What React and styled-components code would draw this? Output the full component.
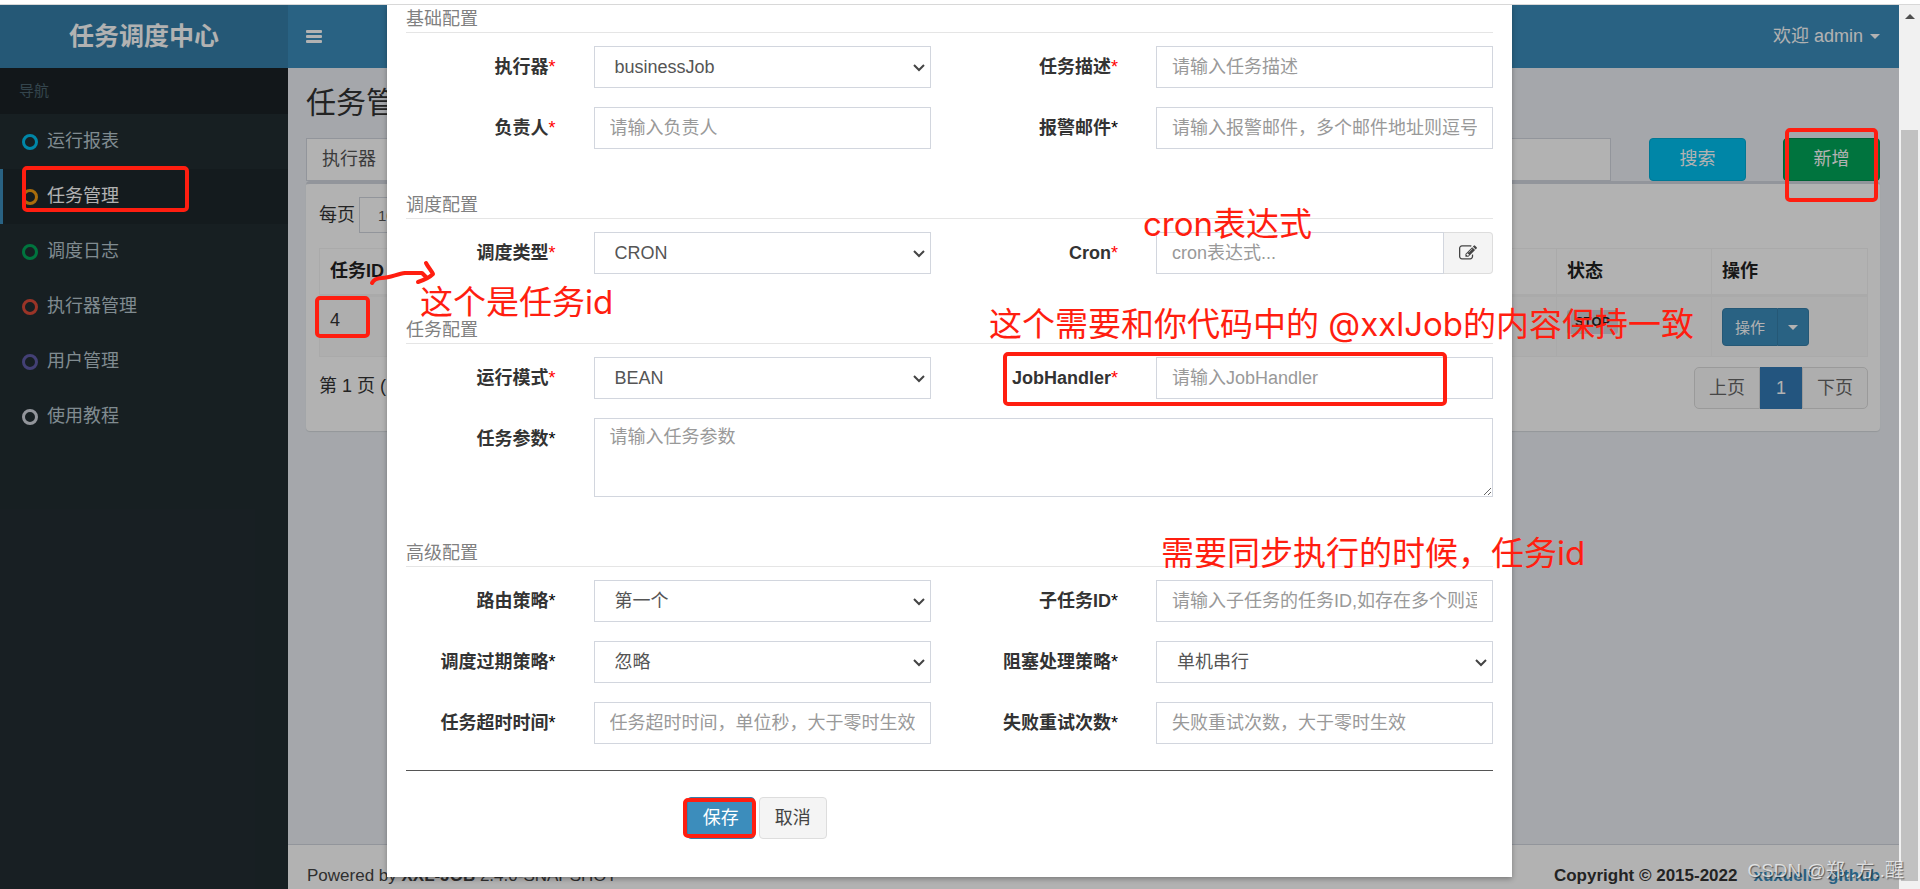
import React, { useState } from 'react';
import styled, { createGlobalStyle, css } from 'styled-components';

const colors = {
  primary: '#3c8dbc',
  primaryDark: '#367fa9',
  sidebar: '#222d32',
  border: '#d2d6de',
  line: '#e5e5e5',
  text: '#333',
  muted: '#999',
  mark: '#ff1e10',
};

const GlobalStyle = createGlobalStyle`
  * {
    box-sizing: border-box;
  }

  body {
    margin: 0;
    background: #fff;
    color: ${colors.text};
    font-family: 'Liberation Sans', 'Noto Sans CJK SC', sans-serif;
    font-size: 18px;
    line-height: 25px;
  }

  button, input, select, textarea {
    font: inherit;
    margin: 0;
  }

  a {
    text-decoration: none;
  }
`;

const Page = styled.div`
  position: relative;
  height: 100vh;
  display: flex;
  flex-direction: column;
  overflow: hidden;
`;

const WindowEdge = styled.div`
  flex: none;
  height: 5px;
  border-bottom: 1px solid #d8d8d8;
`;

const Viewport = styled.div`
  flex: 1;
  min-height: 0;
  display: flex;
`;

const Shell = styled.div`
  position: relative;
  flex: 1;
  min-width: 0;
  display: flex;
  flex-direction: column;
  overflow: hidden;
`;

/* ---------- header ---------- */

const Header = styled.header`
  flex: none;
  display: flex;
  height: 63px;
  background: ${colors.primary};
  color: #fff;
`;

const Logo = styled.a`
  width: 288px;
  background: ${colors.primaryDark};
  color: #fff;
  font-size: 25px;
  font-weight: bold;
  line-height: 63px;
  text-align: center;
`;

const Navbar = styled.nav`
  flex: 1;
  display: flex;
  align-items: center;
  justify-content: space-between;
  padding: 0 19px 0 18px;
`;

const NavButton = styled.button`
  display: flex;
  align-items: center;
  gap: 7px;
  padding: 0;
  border: 0;
  background: none;
  color: #fff;
`;

const Caret = styled.span`
  border: 5px solid transparent;
  border-top-color: currentColor;
  border-bottom: 0;
`;

/* ---------- sidebar ---------- */

const Columns = styled.div`
  flex: 1;
  min-height: 0;
  display: flex;
`;

const Sidebar = styled.aside`
  flex: none;
  width: 288px;
  background: ${colors.sidebar};
`;

const SidebarTitle = styled.div`
  padding: 0 19px;
  background: #1a2226;
  color: #4b646f;
  font-size: 15px;
  line-height: 46px;
`;

const MenuLink = styled.a`
  display: flex;
  align-items: center;
  gap: 9px;
  height: 55px;
  padding-left: 19px;
  border-left: 3px solid transparent;
  color: #b8c7ce;

  ${props => props.$active && css`
    background: #1e282c;
    border-left-color: ${colors.primary};
    color: #fff;
  `}
`;

const Ring = styled.span`
  width: 16px;
  height: 16px;
  border: 3px solid ${props => props.$color};
  border-radius: 50%;
`;

/* ---------- content ---------- */

const Main = styled.div`
  flex: 1;
  min-width: 0;
  display: flex;
  flex-direction: column;
  background: #ecf0f5;
`;

const Content = styled.main`
  flex: 1;
  padding: 16px 19px 0 18px;
`;

const Title = styled.h1`
  margin: 0 0 16px;
  font-size: 30px;
  font-weight: normal;
  line-height: 38px;
`;

const Filters = styled.div`
  display: flex;
  height: 43px;
`;

const FilterGroup = styled.label`
  flex: 1;
  display: flex;
  margin-right: 38px;
`;

const FilterAddon = styled.span`
  padding: 0 15px;
  border: 1px solid ${colors.border};
  background: #fff;
  color: #555;
  line-height: 41px;
`;

const FilterInput = styled.input`
  flex: 1;
  min-width: 0;
  border: 1px solid ${colors.border};
  border-left: 0;
  background: #fff;
`;

const FilterButton = styled.button`
  width: 97px;
  border: 1px solid ${props => props.$border};
  border-radius: 4px;
  background: ${props => props.$color};
  color: #fff;

  & + & {
    margin-left: 37px;
  }
`;

const Box = styled.section`
  padding: 13px 12px 22px 13px;
  border-top: 3px solid ${colors.border};
  border-radius: 4px;
  background: #fff;
  box-shadow: 0 1px 1px rgba(0, 0, 0, 0.1);
`;

const PageLength = styled.label`
  display: flex;
  align-items: center;
  gap: 4px;
  margin-bottom: 15px;
`;

const LengthSelect = styled.select`
  width: 94px;
  height: 36px;
  padding: 0 14px;
  border: 1px solid ${colors.border};
  background: #fff;
  color: #555;
  font-size: 15px;
`;

const JobTable = styled.table`
  width: 100%;
  border-collapse: collapse;
  table-layout: fixed;
  font-size: 18px;

  th, td {
    padding: 10px;
    border: 1px solid #f4f4f4;
    text-align: left;
    vertical-align: top;
  }

  td {
    padding-top: 11px;
  }

  th {
    border-bottom-width: 3px;
    color: #222;
  }

  tbody tr {
    background: #f9f9f9;
  }

  .id {
    width: 120px;
  }

  .status {
    width: 155px;
  }

  .action {
    width: 156px;
  }
`;

const StatusBadge = styled.span`
  display: inline-block;
  padding: 0 8px;
  border-radius: 3px;
  background: ${colors.border};
  color: #222;
  font-size: 13px;
  font-weight: bold;
  line-height: 24px;
`;

const SplitButton = styled.div`
  display: flex;
  height: 38px;
`;

const SplitPart = styled.button`
  display: flex;
  align-items: center;
  padding: 0 12px;
  border: 1px solid ${colors.primaryDark};
  border-radius: 4px 0 0 4px;
  background: ${colors.primary};
  color: #fff;
  font-size: 15px;

  & + & {
    padding: 0 10px;
    border-left: 0;
    border-radius: 0 4px 4px 0;
  }
`;

const TableFooter = styled.div`
  display: flex;
  justify-content: space-between;
  padding-top: 10px;
`;

const TableInfo = styled.div`
  line-height: 38px;
`;

const Pagination = styled.div`
  display: flex;
  height: 42px;
`;

const PageButton = styled.button`
  min-width: 42px;
  padding: 0 14px;
  border: 1px solid #ddd;
  background: #fafafa;
  color: #666;

  &:first-child {
    border-radius: 5px 0 0 5px;
  }

  &:last-child {
    border-radius: 0 5px 5px 0;
  }

  ${props => props.$active && css`
    border-color: #337ab7;
    background: #337ab7;
    color: #fff;
  `}
`;

const Footer = styled.footer`
  flex: none;
  display: flex;
  justify-content: space-between;
  padding: 18px 19px 1px;
  border-top: 1px solid ${colors.border};
  background: #fff;
  color: #444;
  font-size: 17px;
`;

const Copyright = styled.div`
  display: flex;
  gap: 16px;
  color: ${colors.text};
  font-weight: bold;

  a {
    color: ${colors.primary};
  }
`;

/* ---------- modal ---------- */

const Backdrop = styled.div`
  position: absolute;
  inset: 0;
  background: rgba(0, 0, 0, 0.3);
`;

const Modal = styled.form`
  width: 1125px;
  max-width: 100%;
  margin: 0 auto;
  padding: 0 19px 38px;
  background: #fff;
  box-shadow: 0 2px 5px rgba(0, 0, 0, 0.3);
`;

const Group = styled.section`
  & + & {
    margin-top: 42px;
  }
`;

const GroupTitle = styled.p`
  margin: 0 0 13px;
  padding-top: 2px;
  border-bottom: 1px solid ${colors.line};
  color: #808080;
  line-height: 25px;
`;

const Row = styled.div`
  display: grid;
  grid-template-columns: 2fr 4fr 2fr 4fr;
  margin: 0 -19px;

  & + & {
    margin-top: 19px;
  }
`;

const FieldLabel = styled.label`
  min-width: 0;
  padding: 9px 19px 0;
  font-weight: bold;
  line-height: 25px;
  text-align: right;
`;

const Star = styled.span`
  color: ${props => (props.$required ? 'red' : '#000')};
  font-weight: normal;
`;

const Control = styled.div`
  position: relative;
  display: flex;
  min-width: 0;
  margin: 0 19px;
  grid-column: ${props => (props.$wide ? 'span 3' : 'auto')};
`;

const fieldStyle = css`
  flex: 1;
  width: 100%;
  min-width: 0;
  height: 42px;
  border: 1px solid ${colors.border};
  border-radius: 0;
  background: #fff;
  color: #555;
`;

const TextInput = styled.input`
  ${fieldStyle}
  padding: 0 15px;

  &::placeholder {
    color: ${colors.muted};
  }
`;

const Select = styled.select`
  ${fieldStyle}
  padding: 0 20px;
  appearance: none;
`;

const SelectArrow = styled.svg`
  position: absolute;
  right: 6px;
  top: 18px;
  width: 12px;
  height: 8px;
  pointer-events: none;
`;

const TextArea = styled.textarea`
  ${fieldStyle}
  height: 79px;
  padding: 6px 15px;

  &::placeholder {
    color: ${colors.muted};
  }
`;

const AddonButton = styled.button`
  display: flex;
  align-items: center;
  justify-content: center;
  width: 49px;
  border: 1px solid #ddd;
  border-left: 0;
  border-radius: 0 4px 4px 0;
  background: #f4f4f4;
  color: #444;
`;

const Divider = styled.hr`
  margin: 26px 0;
  border: 0;
  border-top: 1px solid #555;
`;

const Actions = styled.div`
  display: flex;
  gap: 4px;
  margin-left: calc(25% + 9px);
`;

const ActionButton = styled.button`
  height: 42px;
  padding: 0 15px;
  border: 1px solid ${props => (props.$primary ? colors.primaryDark : '#ddd')};
  border-radius: 4px;
  background: ${props => (props.$primary ? colors.primary : '#f4f4f4')};
  color: ${props => (props.$primary ? '#fff' : '#444')};
`;

/* ---------- scrollbar ---------- */

const ScrollTrack = styled.div`
  flex: none;
  display: flex;
  flex-direction: column;
  width: 21px;
  padding: 9px 2px 8px;
  background: #f1f1f1;
`;

const ScrollUp = styled.span`
  align-self: center;
  margin-bottom: 111px;
  border: 5px solid transparent;
  border-top: 0;
  border-bottom-color: #505050;
`;

const ScrollThumb = styled.div`
  flex: 1;
  background: #c1c1c1;
`;

/* ---------- notes drawn over the page ---------- */

const Notes = styled.div`
  position: absolute;
  inset: 0;
  pointer-events: none;
`;

const NoteBox = styled.div`
  position: absolute;
  left: ${props => props.$x}px;
  top: ${props => props.$y}px;
  width: ${props => props.$w}px;
  height: ${props => props.$h}px;
  border: 4px solid ${colors.mark};
  border-radius: 5px;
`;

const NoteText = styled.div`
  position: absolute;
  left: ${props => props.$x}px;
  top: ${props => props.$y}px;
  color: ${colors.mark};
  font-family: Inter, 'Noto Sans CJK SC', sans-serif;
  font-size: 33px;
  line-height: 44px;
  white-space: pre;
`;

const NoteArrow = styled.svg`
  position: absolute;
  left: 366px;
  top: 256px;
  width: 74px;
  height: 34px;
`;

const Watermark = styled.div`
  position: absolute;
  right: 16px;
  bottom: 6px;
  color: rgba(255, 255, 255, 0.7);
  font-size: 19px;
  text-shadow: 1px 1px 1px rgba(0, 0, 0, 0.5);
`;

const menu = [
  { name: '运行报表', color: '#00c0ef' },
  { name: '任务管理', color: '#f39c12', active: true },
  { name: '调度日志', color: '#00a65a' },
  { name: '执行器管理', color: '#dd4b39' },
  { name: '用户管理', color: '#605ca8' },
  { name: '使用教程', color: '#d2d6de' },
];

const groups = [
  {
    title: '基础配置',
    rows: [
      [
        { id: 'jobGroup', label: '执行器', required: true, options: ['businessJob'] },
        { id: 'jobDesc', label: '任务描述', required: true, placeholder: '请输入任务描述' },
      ],
      [
        { id: 'author', label: '负责人', required: true, placeholder: '请输入负责人' },
        { id: 'alarmEmail', label: '报警邮件', placeholder: '请输入报警邮件，多个邮件地址则逗号分隔' },
      ],
    ],
  },
  {
    title: '调度配置',
    rows: [
      [
        { id: 'scheduleType', label: '调度类型', required: true, options: ['CRON'] },
        { id: 'cron', label: 'Cron', required: true, placeholder: 'cron表达式...', edit: true },
      ],
    ],
  },
  {
    title: '任务配置',
    rows: [
      [
        { id: 'glueType', label: '运行模式', required: true, options: ['BEAN'] },
        { id: 'handler', label: 'JobHandler', required: true, placeholder: '请输入JobHandler' },
      ],
      [{ id: 'param', label: '任务参数', placeholder: '请输入任务参数', multiline: true }],
    ],
  },
  {
    title: '高级配置',
    rows: [
      [
        { id: 'route', label: '路由策略', options: ['第一个'] },
        { id: 'childJob', label: '子任务ID', placeholder: '请输入子任务的任务ID,如存在多个则逗号分隔' },
      ],
      [
        { id: 'misfire', label: '调度过期策略', options: ['忽略'] },
        { id: 'block', label: '阻塞处理策略', options: ['单机串行'] },
      ],
      [
        { id: 'timeout', label: '任务超时时间', placeholder: '任务超时时间，单位秒，大于零时生效' },
        { id: 'retry', label: '失败重试次数', placeholder: '失败重试次数，大于零时生效' },
      ],
    ],
  },
];

const BarsIcon = () => (
  <svg width="16" height="14" viewBox="0 0 16 14" fill="currentColor" aria-hidden="true">
    <rect y="0" width="16" height="3" rx="1" />
    <rect y="5" width="16" height="3" rx="1" />
    <rect y="10" width="16" height="3" rx="1" />
  </svg>
);

const EditIcon = () => (
  <svg width="18" height="18" viewBox="0 0 1792 1792" fill="currentColor" aria-hidden="true">
    <path d="M888 1184l116-116-152-152-116 116v56h96v96h56zm440-720q-16-16-33 1l-350 350q-17 17-1 33t33-1l350-350q17-17 1-33zm80 594v190q0 119-84.500 203.500t-203.500 84.500h-832q-119 0-203.500-84.500t-84.500-203.500v-832q0-119 84.500-203.500t203.500-84.500h832q63 0 117 25 15 7 18 23 3 17-9 29l-49 49q-14 14-32 8-23-6-45-6h-832q-66 0-113 47t-47 113v832q0 66 47 113t113 47h832q66 0 113-47t47-113v-126q0-13 9-22l64-64q15-15 35-7t20 29zm-96-738l288 288-672 672h-288v-288zm444 132l-92 92-288-288 92-92q28-28 68-28t68 28l152 152q28 28 28 68t-28 68z" />
  </svg>
);

const Field = ({ field }) => {
  const [value, setValue] = useState(field.options ? field.options[0] : '');
  const inputProps = {
    id: field.id,
    value,
    onChange: e => setValue(e.target.value),
  };

  return (
    <>
      <FieldLabel htmlFor={field.id}>
        {field.label}<Star $required={field.required}>*</Star>
      </FieldLabel>
      <Control $wide={field.multiline}>
        {field.options && (
          <>
            <Select {...inputProps}>
              {field.options.map(option => <option key={option}>{option}</option>)}
            </Select>
            <SelectArrow viewBox="0 0 12 8" fill="none" stroke="#444" strokeWidth="2">
              <path d="M1 1l5 5 5-5" />
            </SelectArrow>
          </>
        )}
        {field.multiline && <TextArea {...inputProps} placeholder={field.placeholder} />}
        {!field.options && !field.multiline && (
          <TextInput {...inputProps} type="text" placeholder={field.placeholder} />
        )}
        {field.edit && (
          <AddonButton type="button" aria-label={field.label}>
            <EditIcon />
          </AddonButton>
        )}
      </Control>
    </>
  );
};

const JobModal = () => (
  <Backdrop>
    <Modal onSubmit={e => e.preventDefault()}>
      {groups.map(group => (
        <Group key={group.title}>
          <GroupTitle>{group.title}</GroupTitle>
          {group.rows.map(row => (
            <Row key={row[0].id}>
              {row.map(field => <Field key={field.id} field={field} />)}
            </Row>
          ))}
        </Group>
      ))}
      <Divider />
      <Actions>
        <ActionButton type="submit" $primary>保存</ActionButton>
        <ActionButton type="button">取消</ActionButton>
      </Actions>
    </Modal>
  </Backdrop>
);

const JobList = () => (
  <Content>
    <Title>任务管理</Title>
    <Filters>
      <FilterGroup>
        <FilterAddon>执行器</FilterAddon>
        <FilterInput type="text" />
      </FilterGroup>
      <FilterButton $color="#00c0ef" $border="#00acd6">搜索</FilterButton>
      <FilterButton $color="#00a65a" $border="#008d4c">新增</FilterButton>
    </Filters>
    <Box>
      <PageLength>
        每页
        <LengthSelect defaultValue="10">
          <option>10</option>
        </LengthSelect>
      </PageLength>
      <JobTable>
        <thead>
          <tr>
            <th className="id">任务ID</th>
            <th />
            <th className="status">状态</th>
            <th className="action">操作</th>
          </tr>
        </thead>
        <tbody>
          <tr>
            <td>4</td>
            <td />
            <td><StatusBadge>STOP</StatusBadge></td>
            <td>
              <SplitButton>
                <SplitPart>操作</SplitPart>
                <SplitPart aria-label="操作"><Caret /></SplitPart>
              </SplitButton>
            </td>
          </tr>
        </tbody>
      </JobTable>
      <TableFooter>
        <TableInfo>第 1 页 (</TableInfo>
        <Pagination>
          <PageButton>上页</PageButton>
          <PageButton $active>1</PageButton>
          <PageButton>下页</PageButton>
        </Pagination>
      </TableFooter>
    </Box>
  </Content>
);

const App = () => (
  <Page>
    <GlobalStyle />
    <WindowEdge />
    <Viewport>
      <Shell>
        <Header>
          <Logo href="#">任务调度中心</Logo>
          <Navbar>
            <NavButton aria-label="导航"><BarsIcon /></NavButton>
            <NavButton>欢迎 admin <Caret /></NavButton>
          </Navbar>
        </Header>
        <Columns>
          <Sidebar>
            <SidebarTitle>导航</SidebarTitle>
            {menu.map(item => (
              <MenuLink key={item.name} href="#" $active={item.active}>
                <Ring $color={item.color} />
                {item.name}
              </MenuLink>
            ))}
          </Sidebar>
          <Main>
            <JobList />
            <Footer>
              <div>Powered by <b>XXL-JOB</b> 2.4.0-SNAPSHOT</div>
              <Copyright>
                Copyright © 2015-2022
                <a href="#">xuxueli</a>
                <a href="#">github</a>
              </Copyright>
            </Footer>
          </Main>
        </Columns>
        <JobModal />
      </Shell>
      <ScrollTrack aria-hidden="true">
        <ScrollUp />
        <ScrollThumb />
      </ScrollTrack>
    </Viewport>
    <Notes>
      <NoteBox $x={22} $y={166} $w={167} $h={46} />
      <NoteBox $x={315} $y={296} $w={55} $h={42} />
      <NoteBox $x={1003} $y={352} $w={444} $h={54} />
      <NoteBox $x={1785} $y={128} $w={93} $h={74} />
      <NoteBox $x={683} $y={798} $w={73} $h={40} />
      <NoteText $x={420} $y={280}>这个是任务id</NoteText>
      <NoteText $x={1143} $y={202}>cron表达式</NoteText>
      <NoteText $x={989} $y={302}>这个需要和你代码中的 @xxlJob的内容保持一致</NoteText>
      <NoteText $x={1161} $y={531}>需要同步执行的时候，任务id</NoteText>
      <NoteArrow viewBox="0 0 74 34" fill="none" stroke={colors.mark} strokeWidth="4" strokeLinecap="round" strokeLinejoin="round">
        <path d="M6 27c2-4 6-5 10-5 8 0 15-4 23-5h17l4 4" />
        <path d="M60 7c2 4 5 7 7 11-4 4-9 6-15 8" />
      </NoteArrow>
      <Watermark>CSDN @郑..方..醒</Watermark>
    </Notes>
  </Page>
);

export default App;
